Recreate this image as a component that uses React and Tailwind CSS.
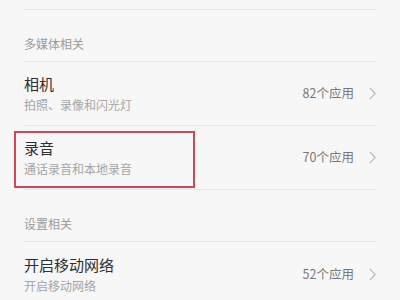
const font = { fontFamily: '"Noto Sans CJK SC", "Noto Sans", sans-serif' };

const SectionHeader = ({ label }) => (
  <div className="h-[52px] flex items-end pb-[9px] border-b border-[#e6e6e6]">
    <span className="text-[12px] leading-[17px] text-[#9a9a9a]">{label}</span>
  </div>
);

const Chevron = () => (
  <svg width="7" height="13" viewBox="0 0 7 13" className="ml-[15px]">
    <path d="M0.8 0.8 L6.2 6.5 L0.8 12.2" fill="none" stroke="#b5b5b5" strokeWidth="1.1" />
  </svg>
);

const Row = ({ title, sub, count, highlight, last }) => (
  <div
    className={
      "relative h-[64px] flex items-center justify-between " +
      (last ? "" : "border-b border-[#e6e6e6]")
    }
  >
    <div className="flex flex-col">
      <span className="text-[15px] leading-[20px] text-[#2e2e2e]">{title}</span>
      <span className="text-[12px] leading-[17px] mt-[2px] text-[#a5a5a5]">{sub}</span>
    </div>
    <div className="flex items-center">
      <span className="text-[12.5px] text-[#777777]">{count}</span>
      <Chevron />
    </div>
    {highlight && (
      <div className="absolute left-[-10px] top-[5px] w-[181px] h-[57px] border-2 border-[#c94b5a]" />
    )}
  </div>
);

export default function App() {
  return (
    <div className="w-[400px] h-[300px] overflow-hidden bg-[#f7f7f7]" style={font}>
      <div className="px-6">
        <div className="h-[10px] border-b border-[#e6e6e6]" />
        <SectionHeader label="多媒体相关" />
        <Row title="相机" sub="拍照、录像和闪光灯" count="82个应用" />
        <Row title="录音" sub="通话录音和本地录音" count="70个应用" highlight />
        <SectionHeader label="设置相关" />
        <Row title="开启移动网络" sub="开启移动网络" count="52个应用" last />
      </div>
    </div>
  );
}
